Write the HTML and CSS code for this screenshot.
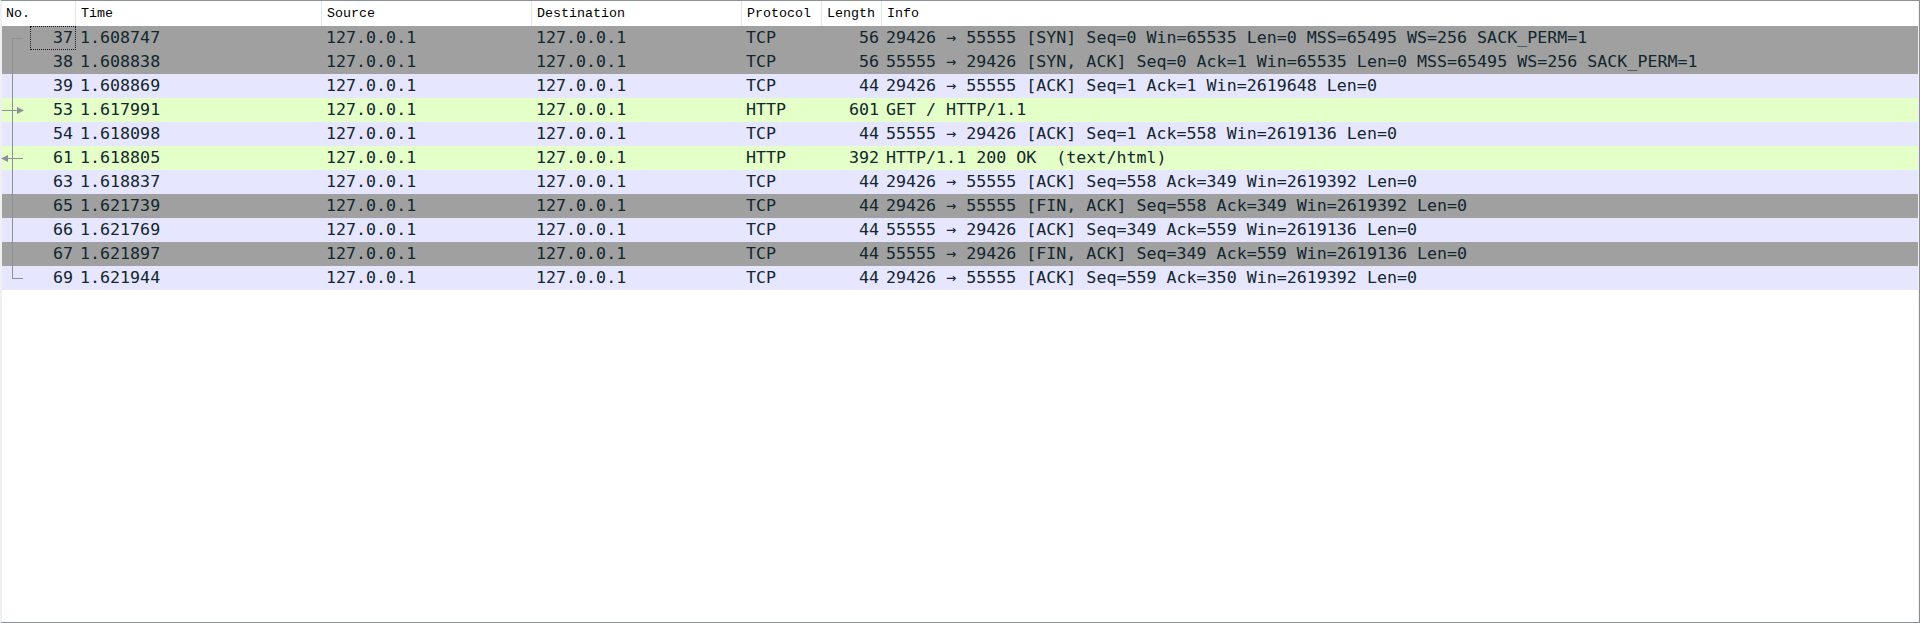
FILE: index.html
```html
<!DOCTYPE html>
<html>
<head>
<meta charset="utf-8">
<title>Packet list</title>
<link rel="stylesheet" href="styles.css">
</head>
<body>
<div class="pane">
  <div class="list">
    <div class="hdr">
      <div class="hc">No.</div>
      <div class="hc">Time</div>
      <div class="hc">Source</div>
      <div class="hc">Destination</div>
      <div class="hc">Protocol</div>
      <div class="hc">Length</div>
      <div class="hc last">Info</div>
    </div>
    <div class="rows">
      <svg class="tree" width="30" height="264" viewBox="0 0 30 264">
        <g stroke="#8c9199" stroke-width="1" fill="none">
          <path d="M12.5 12 V252.5"/>
          <path d="M12 12.5 H23"/>
          <path d="M12 252.5 H23"/>
          <path d="M2 84.5 H17"/>
          <path d="M8 132.5 H23"/>
        </g>
        <g fill="#8c9199">
          <path d="M17 81 L24 84.5 L17 88 Z"/>
          <path d="M8 129 L1 132.5 L8 136 Z"/>
        </g>
      </svg>
      <div class="row gray sel"><div class="c num"><span class="focus"></span>37</div><div class="c">1.608747</div><div class="c">127.0.0.1</div><div class="c">127.0.0.1</div><div class="c">TCP</div><div class="c num">56</div><div class="c info">29426 → 55555 [SYN] Seq=0 Win=65535 Len=0 MSS=65495 WS=256 SACK_PERM=1</div></div>
      <div class="row gray"><div class="c num">38</div><div class="c">1.608838</div><div class="c">127.0.0.1</div><div class="c">127.0.0.1</div><div class="c">TCP</div><div class="c num">56</div><div class="c info">55555 → 29426 [SYN, ACK] Seq=0 Ack=1 Win=65535 Len=0 MSS=65495 WS=256 SACK_PERM=1</div></div>
      <div class="row tcp"><div class="c num">39</div><div class="c">1.608869</div><div class="c">127.0.0.1</div><div class="c">127.0.0.1</div><div class="c">TCP</div><div class="c num">44</div><div class="c info">29426 → 55555 [ACK] Seq=1 Ack=1 Win=2619648 Len=0</div></div>
      <div class="row http"><div class="c num">53</div><div class="c">1.617991</div><div class="c">127.0.0.1</div><div class="c">127.0.0.1</div><div class="c">HTTP</div><div class="c num">601</div><div class="c info">GET / HTTP/1.1</div></div>
      <div class="row tcp"><div class="c num">54</div><div class="c">1.618098</div><div class="c">127.0.0.1</div><div class="c">127.0.0.1</div><div class="c">TCP</div><div class="c num">44</div><div class="c info">55555 → 29426 [ACK] Seq=1 Ack=558 Win=2619136 Len=0</div></div>
      <div class="row http"><div class="c num">61</div><div class="c">1.618805</div><div class="c">127.0.0.1</div><div class="c">127.0.0.1</div><div class="c">HTTP</div><div class="c num">392</div><div class="c info">HTTP/1.1 200 OK  (text/html)</div></div>
      <div class="row tcp"><div class="c num">63</div><div class="c">1.618837</div><div class="c">127.0.0.1</div><div class="c">127.0.0.1</div><div class="c">TCP</div><div class="c num">44</div><div class="c info">29426 → 55555 [ACK] Seq=558 Ack=349 Win=2619392 Len=0</div></div>
      <div class="row gray"><div class="c num">65</div><div class="c">1.621739</div><div class="c">127.0.0.1</div><div class="c">127.0.0.1</div><div class="c">TCP</div><div class="c num">44</div><div class="c info">29426 → 55555 [FIN, ACK] Seq=558 Ack=349 Win=2619392 Len=0</div></div>
      <div class="row tcp"><div class="c num">66</div><div class="c">1.621769</div><div class="c">127.0.0.1</div><div class="c">127.0.0.1</div><div class="c">TCP</div><div class="c num">44</div><div class="c info">55555 → 29426 [ACK] Seq=349 Ack=559 Win=2619136 Len=0</div></div>
      <div class="row gray"><div class="c num">67</div><div class="c">1.621897</div><div class="c">127.0.0.1</div><div class="c">127.0.0.1</div><div class="c">TCP</div><div class="c num">44</div><div class="c info">55555 → 29426 [FIN, ACK] Seq=349 Ack=559 Win=2619136 Len=0</div></div>
      <div class="row tcp"><div class="c num">69</div><div class="c">1.621944</div><div class="c">127.0.0.1</div><div class="c">127.0.0.1</div><div class="c">TCP</div><div class="c num">44</div><div class="c info">29426 → 55555 [ACK] Seq=559 Ack=350 Win=2619392 Len=0</div></div>
    </div>
  </div>
</div>
</body>
</html>
```
FILE: styles.css
```css
html, body {
  margin: 0;
  padding: 0;
  width: 1920px;
  height: 623px;
  overflow: hidden;
  background: #ffffff;
}

.pane {
  box-sizing: border-box;
  width: 1920px;
  height: 623px;
  border-top: 1px solid #8b8f96;
  border-right: 1px solid #8b8f96;
  border-bottom: 1px solid #8b8f96;
  border-left: 2px solid #f0f0f0;
  background: #ffffff;
}

.list {
  box-sizing: border-box;
  height: 100%;
  border-right: 1px solid #f0f0f0;
}

.hdr,
.row {
  display: grid;
  grid-template-columns: 74px 246px 210px 210px 80px 60px 1fr;
}

.hdr {
  height: 25px;
  background: #ffffff;
}

.hc {
  box-sizing: border-box;
  height: 25px;
  line-height: 25px;
  padding-left: 5px;
  border-right: 1px solid #e5e5e5;
  font-family: "Liberation Mono", "DejaVu Sans Mono", monospace;
  font-size: 13.33px;
  color: #000000;
  white-space: pre;
  overflow: hidden;
}

.hc:first-child {
  padding-left: 4px;
}

.hc.last {
  border-right: none;
}

.rows {
  position: relative;
}

.tree {
  position: absolute;
  left: -2px;
  top: 0;
  z-index: 2;
  pointer-events: none;
}

.row {
  height: 24px;
}

.row.gray { background: #a0a0a0; }
.row.tcp { background: #e7e6ff; }
.row.http { background: #e4ffc7; }

.c {
  position: relative;
  box-sizing: border-box;
  height: 24px;
  line-height: 24px;
  padding: 0 4px 0 4px;
  font-family: "DejaVu Sans Mono", "Liberation Mono", monospace;
  font-size: 16.65px;
  color: #12272e;
  white-space: pre;
  overflow: hidden;
}

.c.num {
  text-align: right;
  padding-right: 3px;
}

.c.info {
  overflow: visible;
}

.focus {
  position: absolute;
  left: 28px;
  top: 0;
  width: 46px;
  height: 24px;
  box-sizing: border-box;
  border: 1px dotted #1a1a1a;
}
```
